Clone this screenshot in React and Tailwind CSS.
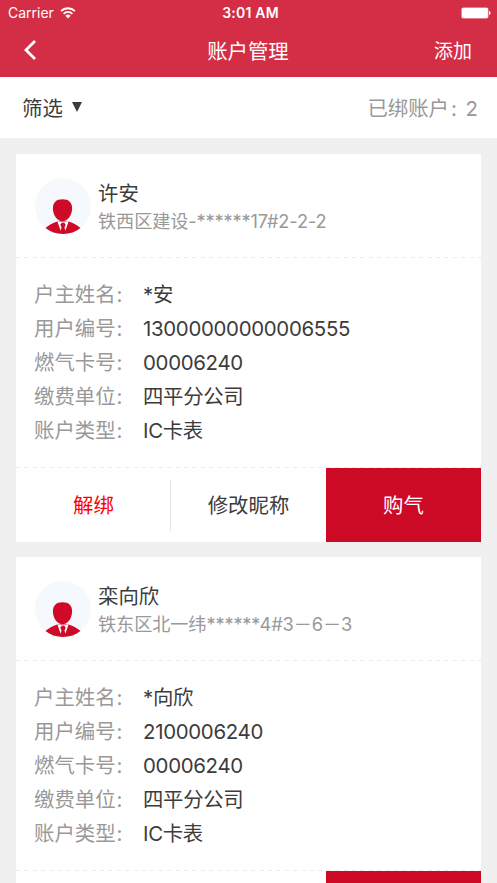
const accounts = [
  {
    name: '许安',
    address: '铁西区建设-******17#2-2-2',
    fields: [
      { label: '户主姓名', value: '*安' },
      { label: '用户编号', value: '13000000000006555' },
      { label: '燃气卡号', value: '00006240' },
      { label: '缴费单位', value: '四平分公司' },
      { label: '账户类型', value: 'IC卡表' },
    ],
  },
  {
    name: '栾向欣',
    address: '铁东区北一纬******4#3－6－3',
    fields: [
      { label: '户主姓名', value: '*向欣' },
      { label: '用户编号', value: '2100006240' },
      { label: '燃气卡号', value: '00006240' },
      { label: '缴费单位', value: '四平分公司' },
      { label: '账户类型', value: 'IC卡表' },
    ],
  },
];

const WifiIcon = () => (
  <svg className="ml-1.5 h-3 w-4" viewBox="0 0 16 12" fill="none" stroke="white" strokeWidth="1.8">
    <path d="M1.100 4.100a9.800 9.800 0 0 1 13.800 0" />
    <path d="M3.600 6.800a6.200 6.200 0 0 1 8.800 0" />
    <path d="M8 11.400 5.400 8.800a3.700 3.700 0 0 1 5.200 0z" fill="white" stroke="none" />
  </svg>
);

const BatteryIcon = () => (
  <svg className="h-3 w-[30px]" viewBox="0 0 30 12">
    <rect x="0.4" y="0.4" width="27" height="11.2" rx="1.8" fill="white" fillOpacity="0.75" />
    <rect x="1" y="1" width="25.8" height="10" rx="1.2" fill="white" />
    <path d="M28 4v4c1-.3 1.5-1 1.5-2S29 4.300 28 4z" fill="white" />
  </svg>
);

const Avatar = () => (
  <svg className="h-14 w-14 shrink-0" viewBox="0 0 56 56">
    <circle cx="28" cy="28" r="28" fill="#f5f9fd" />
    <g fill="#cf0a27">
      <path d="M27.500 21.300c6.400 0 9.600 3.300 9.600 9.200 0 6.800-4.500 12.800-9.600 12.800s-9.600-6-9.600-12.800c0-5.900 3.200-9.200 9.600-9.200z" />
      {/* shoulders */}
      <path d="M22.200 43.500h11.600c4.600 1.800 8.400 3.400 11.700 6.600-4.700 4-10.700 5.900-17.500 5.900s-12.800-1.900-17.500-5.900c3.300-3.200 7.100-4.800 11.700-6.600z" />
    </g>
    {/* collar and tie */}
    <path d="M22.300 43.300 28 44.600l5.700-1.300-2.900 8.200-1.300 2.300h-3l-1.300-2.300z" fill="#f5f9fd" />
    <path d="M26.700 45h2.800l1.200 1.800-1.200 2.400 1 4.600-2.500 2-2.500-2 1-4.600-1.200-2.400z" fill="#cf0a27" />
  </svg>
);

const Divider = () => (
  <div className="h-px bg-[repeating-linear-gradient(90deg,#ebebeb_0_4px,transparent_4px_8.4px)]" />
);

const AccountCard = ({ account }) => (
  <div className="flex h-[388px] shrink-0 flex-col bg-white">
    <div className="flex h-[103px] items-center pl-[19px]">
      <Avatar />
      <div className="ml-[7px] pt-0.5">
        <p className="text-[20.4px] leading-7">{account.name}</p>
        <p className="text-[18.2px] leading-[26px] tracking-[-0.12px] text-[#999]">{account.address}</p>
      </div>
    </div>
    <Divider />
    <dl className="flex h-[209px] flex-col justify-center pl-[18px] pt-px text-[20.4px] leading-[34px]">
      {account.fields.map(({ label, value }) => (
        <div key={label} className="flex">
          <dt className="w-[109px] whitespace-nowrap text-[#999]">
            {label}
            <span className="ml-px">:</span>
          </dt>
          <dd className="tracking-[-0.3px]">{value}</dd>
        </div>
      ))}
    </dl>
    <Divider />
    <div className="grid flex-1 grid-cols-3 text-[20.4px]">
      <button className="relative pt-[3px] text-[#f00]">
        解绑
        <span className="absolute right-0 top-3 h-[51px] w-px bg-[#e5e5e5]" />
      </button>
      <button className="pt-[3px]">修改昵称</button>
      <button className="bg-[#cd0a26] pt-[3px] text-white">购气</button>
    </div>
  </div>
);

const App = () => {
  return (
    <div className="flex h-[883px] flex-col overflow-hidden bg-[#f0f0f0] font-['Inter','Noto_Sans_CJK_SC',sans-serif] font-normal text-[#3c3c3c]">
      {/* Status bar + nav */}
      <header className="h-[77px] shrink-0 bg-[#d42d46] text-white">
        <div className="grid h-[25px] grid-cols-3 items-center pl-2 pr-1.5 text-[14px]">
          <div className="flex items-center">
            Carrier
            <WifiIcon />
          </div>
          <span className="pl-0.5 text-center font-semibold tracking-[0.2px]">3:01 AM</span>
          <div className="flex justify-end">
            <BatteryIcon />
          </div>
        </div>
        <div className="grid h-[50px] grid-cols-3 items-center pl-6 pr-[25px] text-[20.4px]">
          <svg className="h-5 w-3" viewBox="0 0 12 20" fill="none" stroke="white" strokeWidth="2.800">
            <path d="M11 1 2 10l9 9" />
          </svg>
          <h1 className="pt-1 text-center">账户管理</h1>
          <button className="pt-1 text-right text-[19px]">添加</button>
        </div>
      </header>

      {/* Filter */}
      <div className="flex h-[61px] shrink-0 items-center justify-between bg-white pl-[22px] pr-[19px] text-[20.4px]">
        <button className="flex items-center">
          <span className="pt-1">筛选</span>
          <svg className="ml-[9px] h-2.5 w-2.5" viewBox="0 0 10 10" fill="#3c3c3c">
            <path d="M0 0h10L5 10z" />
          </svg>
        </button>
        <span className="pt-[3px] text-[#999]">
          已绑账户<span className="ml-0.5 mr-[3px]">:</span> 2
        </span>
      </div>

      <main className="flex flex-col gap-[15px] px-4 pt-4">
        {accounts.map((account) => (
          <AccountCard key={account.name} account={account} />
        ))}
      </main>
    </div>
  );
};

export default App;
